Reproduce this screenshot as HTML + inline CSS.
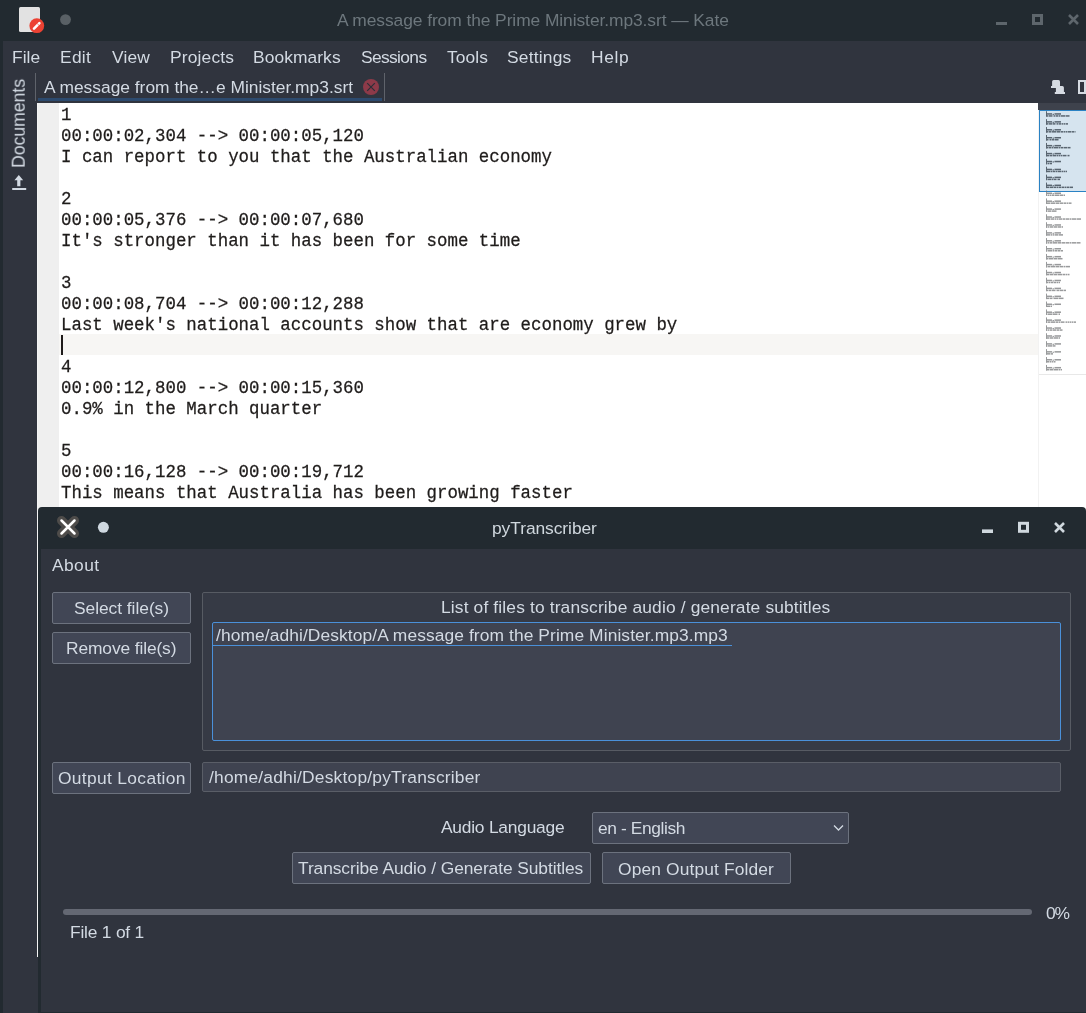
<!DOCTYPE html>
<html><head><meta charset="utf-8"><style>
*{margin:0;padding:0;box-sizing:border-box}
html,body{width:1086px;height:1013px;overflow:hidden;background:#30343e;position:relative}
.a{position:absolute}
.t{position:absolute;will-change:transform;white-space:pre;line-height:20px;font-family:"Liberation Sans", sans-serif}
.m{position:absolute;will-change:transform;transform-origin:0 15.14px;transform:scaleY(1.07);-webkit-text-stroke:0.25px #1f1c1b;left:61px;white-space:pre;line-height:21px;font-family:"Liberation Mono", monospace;font-size:17.42px;color:#1f1c1b}
</style></head><body>
<!-- Kate title bar -->
<div class="a" style="left:0;top:0;width:1086px;height:41px;background:#222a30"></div>
<div class="a" style="left:0;top:41px;width:3px;height:972px;background:#222a30"></div>
<div class="a" style="left:19px;top:7px;width:20.5px;height:25px;background:#e2e2e2;border-radius:1.5px"></div>
<svg class="a" style="left:0;top:0" width="120" height="41">
 <circle cx="36.8" cy="25.7" r="7.4" fill="#ec4233"/>
 <line x1="34" y1="28.6" x2="39.4" y2="23.2" stroke="#fff" stroke-width="2.6" stroke-linecap="round"/>
 <line x1="37.2" y1="23.6" x2="39" y2="25.4" stroke="#ec4233" stroke-width="0.7"/>
 <circle cx="65.5" cy="19.6" r="5.4" fill="#596065"/>
</svg>
<svg class="a" style="left:990px;top:10px" width="96" height="20">
 <rect x="6" y="12" width="11" height="3" fill="#5e666c"/>
 <rect x="43.5" y="5.5" width="8" height="8" fill="none" stroke="#5e666c" stroke-width="3"/>
 <path d="M79 5 L88 14 M88 5 L79 14" stroke="#5e666c" stroke-width="2.6"/>
</svg>
<!-- tab bar -->
<div class="a" style="left:35px;top:73px;width:1px;height:28px;background:#5f636b"></div>
<div class="a" style="left:384px;top:73px;width:1px;height:28px;background:#5f636b"></div>
<div class="a" style="left:38px;top:98px;width:344px;height:3px;background:#2c4a6e"></div>
<svg class="a" style="left:355px;top:72px" width="32" height="30">
 <circle cx="16" cy="15" r="8" fill="#8d3a49"/>
 <path d="M12.2 11.2 L19.8 18.8 M19.8 11.2 L12.2 18.8" stroke="#2b2f38" stroke-width="1.2"/>
</svg>
<svg class="a" style="left:1045px;top:75px" width="41" height="22">
 <path d="M7.1 13 V6.5 Q7.1 5 8.6 5 H13.5 Q15 5 15 6.5 V13 Z" fill="#d6dbe2"/>
 <rect x="6" y="11" width="9" height="2" fill="#d6dbe2"/>
 <path d="M10.9 19 V12.5 Q10.9 11 12.4 11 H17.4 Q18.9 11 18.9 12.5 V19 Z" fill="#d6dbe2"/>
 <rect x="9.8" y="17" width="10.2" height="2" fill="#d6dbe2"/>
 <rect x="34" y="6" width="6" height="12" fill="none" stroke="#d6dbe2" stroke-width="2"/>
</svg>
<!-- editor -->
<div class="a" style="left:37px;top:103px;width:1049px;height:854px;background:#ffffff"></div>
<div class="a" style="left:37px;top:103px;width:1px;height:854px;background:#f4f4f4"></div>
<div class="a" style="left:38px;top:103px;width:21px;height:854px;background:#efefef"></div>
<div class="a" style="left:59px;top:334px;width:979px;height:21px;background:#f7f6f4"></div>
<div class="a" style="left:61px;top:335px;width:2px;height:20px;background:#1f1c1b"></div>
<div class="m" style="top:105.16px">1</div>
<div class="m" style="top:126.16px">00:00:02,304 --&gt; 00:00:05,120</div>
<div class="m" style="top:147.16px">I can report to you that the Australian economy</div>
<div class="m" style="top:189.16px">2</div>
<div class="m" style="top:210.16px">00:00:05,376 --&gt; 00:00:07,680</div>
<div class="m" style="top:231.16px">It's stronger than it has been for some time</div>
<div class="m" style="top:273.16px">3</div>
<div class="m" style="top:294.16px">00:00:08,704 --&gt; 00:00:12,288</div>
<div class="m" style="top:315.16px">Last week's national accounts show that are economy grew by</div>
<div class="m" style="top:357.16px">4</div>
<div class="m" style="top:378.16px">00:00:12,800 --&gt; 00:00:15,360</div>
<div class="m" style="top:399.16px">0.9% in the March quarter</div>
<div class="m" style="top:441.16px">5</div>
<div class="m" style="top:462.16px">00:00:16,128 --&gt; 00:00:19,712</div>
<div class="m" style="top:483.16px">This means that Australia has been growing faster</div>
<div class="m" style="top:525.16px">6</div>
<div class="m" style="top:546.16px">00:00:20,000 --&gt; 00:00:22,000</div>
<div class="m" style="top:567.16px">than most other developed economies</div>
<!-- minimap -->
<div class="a" style="left:1038px;top:103px;width:48px;height:7px;background:#3e424c"></div>
<div class="a" style="left:1038px;top:110px;width:1px;height:847px;background:#f2f2f2"></div>
<div class="a" style="left:1039px;top:110px;width:47px;height:82px;background:#d6e4ef;border:1px solid #2a82c4;border-right:none"></div>
<div class="a" style="left:1039px;top:374px;width:47px;height:1px;background:#e8e8e8"></div>
<svg class="a" style="left:0;top:0" width="1086" height="400">
<g fill="#26313c" opacity="0.7"><rect x="1046" y="111.20" width="1" height="5.5"/><rect x="1046" y="113.20" width="6" height="1.5"/><rect x="1052.5" y="113.80" width="1.5" height="1.1"/><rect x="1054.5" y="113.20" width="6.5" height="1.5"/><rect x="1046.0" y="115.20" width="0.5" height="1.5"/><rect x="1047.0" y="115.20" width="1.5" height="1.5"/><rect x="1049.0" y="115.20" width="3.0" height="1.5"/><rect x="1052.5" y="115.20" width="1.0" height="1.5"/><rect x="1054.0" y="115.20" width="1.5" height="1.5"/><rect x="1056.0" y="115.20" width="2.0" height="1.5"/><rect x="1058.5" y="115.20" width="1.5" height="1.5"/><rect x="1060.5" y="115.20" width="5.0" height="1.5"/><rect x="1066.0" y="115.20" width="3.5" height="1.5"/></g>
<g fill="#26313c" opacity="0.7"><rect x="1046" y="119.13" width="1" height="5.5"/><rect x="1046" y="121.13" width="6" height="1.5"/><rect x="1052.5" y="121.73" width="1.5" height="1.1"/><rect x="1054.5" y="121.13" width="6.5" height="1.5"/><rect x="1046.0" y="123.13" width="2.0" height="1.5"/><rect x="1048.5" y="123.13" width="4.0" height="1.5"/><rect x="1053.0" y="123.13" width="2.0" height="1.5"/><rect x="1055.5" y="123.13" width="1.0" height="1.5"/><rect x="1057.0" y="123.13" width="1.5" height="1.5"/><rect x="1059.0" y="123.13" width="2.0" height="1.5"/><rect x="1061.5" y="123.13" width="1.5" height="1.5"/><rect x="1063.5" y="123.13" width="2.0" height="1.5"/><rect x="1066.0" y="123.13" width="2.0" height="1.5"/></g>
<g fill="#26313c" opacity="0.7"><rect x="1046" y="127.06" width="1" height="5.5"/><rect x="1046" y="129.06" width="6" height="1.5"/><rect x="1052.5" y="129.66" width="1.5" height="1.1"/><rect x="1054.5" y="129.06" width="6.5" height="1.5"/><rect x="1046.0" y="131.06" width="2.0" height="1.5"/><rect x="1048.5" y="131.06" width="3.0" height="1.5"/><rect x="1052.0" y="131.06" width="4.0" height="1.5"/><rect x="1056.5" y="131.06" width="4.0" height="1.5"/><rect x="1061.0" y="131.06" width="2.0" height="1.5"/><rect x="1063.5" y="131.06" width="2.0" height="1.5"/><rect x="1066.0" y="131.06" width="1.5" height="1.5"/><rect x="1068.0" y="131.06" width="3.5" height="1.5"/><rect x="1072.0" y="131.06" width="2.0" height="1.5"/><rect x="1074.5" y="131.06" width="1.0" height="1.5"/></g>
<g fill="#26313c" opacity="0.7"><rect x="1046" y="134.99" width="1" height="5.5"/><rect x="1046" y="136.99" width="6" height="1.5"/><rect x="1052.5" y="137.59" width="1.5" height="1.1"/><rect x="1054.5" y="136.99" width="6.5" height="1.5"/><rect x="1046.0" y="138.99" width="2.0" height="1.5"/><rect x="1048.5" y="138.99" width="1.0" height="1.5"/><rect x="1050.0" y="138.99" width="1.5" height="1.5"/><rect x="1052.0" y="138.99" width="2.5" height="1.5"/><rect x="1055.0" y="138.99" width="3.5" height="1.5"/></g>
<g fill="#26313c" opacity="0.7"><rect x="1046" y="142.92" width="1" height="5.5"/><rect x="1046" y="144.92" width="6" height="1.5"/><rect x="1052.5" y="145.52" width="1.5" height="1.1"/><rect x="1054.5" y="144.92" width="6.5" height="1.5"/><rect x="1046.0" y="146.92" width="2.0" height="1.5"/><rect x="1048.5" y="146.92" width="2.5" height="1.5"/><rect x="1051.5" y="146.92" width="2.0" height="1.5"/><rect x="1054.0" y="146.92" width="4.5" height="1.5"/><rect x="1059.0" y="146.92" width="1.5" height="1.5"/><rect x="1061.0" y="146.92" width="2.0" height="1.5"/><rect x="1063.5" y="146.92" width="3.5" height="1.5"/><rect x="1067.5" y="146.92" width="3.0" height="1.5"/></g>
<g fill="#26313c" opacity="0.7"><rect x="1046" y="150.85" width="1" height="5.5"/><rect x="1046" y="152.85" width="6" height="1.5"/><rect x="1052.5" y="153.45" width="1.5" height="1.1"/><rect x="1054.5" y="152.85" width="6.5" height="1.5"/><rect x="1046.0" y="154.85" width="3.5" height="1.5"/><rect x="1050.0" y="154.85" width="2.0" height="1.5"/><rect x="1052.5" y="154.85" width="4.0" height="1.5"/><rect x="1057.0" y="154.85" width="1.0" height="1.5"/><rect x="1058.5" y="154.85" width="1.5" height="1.5"/><rect x="1060.5" y="154.85" width="1.5" height="1.5"/><rect x="1062.5" y="154.85" width="3.5" height="1.5"/><rect x="1066.5" y="154.85" width="1.0" height="1.5"/><rect x="1068.0" y="154.85" width="1.5" height="1.5"/></g>
<g fill="#26313c" opacity="0.7"><rect x="1046" y="158.78" width="1" height="5.5"/><rect x="1046" y="160.78" width="6" height="1.5"/><rect x="1052.5" y="161.38" width="1.5" height="1.1"/><rect x="1054.5" y="160.78" width="6.5" height="1.5"/><rect x="1046.0" y="162.78" width="1.0" height="1.5"/><rect x="1047.5" y="162.78" width="1.5" height="1.5"/><rect x="1049.5" y="162.78" width="2.5" height="1.5"/></g>
<g fill="#26313c" opacity="0.7"><rect x="1046" y="166.71" width="1" height="5.5"/><rect x="1046" y="168.71" width="6" height="1.5"/><rect x="1052.5" y="169.31" width="1.5" height="1.1"/><rect x="1054.5" y="168.71" width="6.5" height="1.5"/><rect x="1046.0" y="170.71" width="4.0" height="1.5"/><rect x="1050.5" y="170.71" width="1.5" height="1.5"/><rect x="1052.5" y="170.71" width="2.5" height="1.5"/><rect x="1055.5" y="170.71" width="1.5" height="1.5"/><rect x="1057.5" y="170.71" width="4.0" height="1.5"/><rect x="1062.0" y="170.71" width="1.0" height="1.5"/><rect x="1063.5" y="170.71" width="1.5" height="1.5"/><rect x="1065.5" y="170.71" width="1.5" height="1.5"/></g>
<g fill="#26313c" opacity="0.7"><rect x="1046" y="174.64" width="1" height="5.5"/><rect x="1046" y="176.64" width="6" height="1.5"/><rect x="1052.5" y="177.24" width="1.5" height="1.1"/><rect x="1054.5" y="176.64" width="6.5" height="1.5"/><rect x="1046.0" y="178.64" width="1.0" height="1.5"/><rect x="1047.5" y="178.64" width="4.0" height="1.5"/><rect x="1052.0" y="178.64" width="1.0" height="1.5"/><rect x="1053.5" y="178.64" width="2.5" height="1.5"/><rect x="1056.5" y="178.64" width="1.0" height="1.5"/><rect x="1058.0" y="178.64" width="2.0" height="1.5"/></g>
<g fill="#26313c" opacity="0.7"><rect x="1046" y="182.57" width="1" height="5.5"/><rect x="1046" y="184.57" width="6" height="1.5"/><rect x="1052.5" y="185.17" width="1.5" height="1.1"/><rect x="1054.5" y="184.57" width="6.5" height="1.5"/><rect x="1046.0" y="186.57" width="3.0" height="1.5"/><rect x="1049.5" y="186.57" width="4.0" height="1.5"/><rect x="1054.0" y="186.57" width="2.0" height="1.5"/><rect x="1056.5" y="186.57" width="1.5" height="1.5"/><rect x="1058.5" y="186.57" width="3.0" height="1.5"/><rect x="1062.0" y="186.57" width="2.0" height="1.5"/><rect x="1064.5" y="186.57" width="1.5" height="1.5"/><rect x="1066.5" y="186.57" width="2.5" height="1.5"/><rect x="1069.5" y="186.57" width="3.5" height="1.5"/></g>
<g fill="#6e7072" opacity="0.7"><rect x="1046" y="190.50" width="1" height="5.5"/><rect x="1046" y="192.50" width="6" height="1.5"/><rect x="1052.5" y="193.10" width="1.5" height="1.1"/><rect x="1054.5" y="192.50" width="6.5" height="1.5"/><rect x="1046.0" y="194.50" width="1.5" height="1.5"/><rect x="1048.0" y="194.50" width="1.5" height="1.5"/><rect x="1050.0" y="194.50" width="1.0" height="1.5"/><rect x="1051.5" y="194.50" width="2.5" height="1.5"/><rect x="1054.5" y="194.50" width="4.5" height="1.5"/><rect x="1059.5" y="194.50" width="4.0" height="1.5"/><rect x="1064.0" y="194.50" width="1.0" height="1.5"/></g>
<g fill="#6e7072" opacity="0.7"><rect x="1046" y="198.43" width="1" height="5.5"/><rect x="1046" y="200.43" width="6" height="1.5"/><rect x="1052.5" y="201.03" width="1.5" height="1.1"/><rect x="1054.5" y="200.43" width="6.5" height="1.5"/><rect x="1046.0" y="202.43" width="4.5" height="1.5"/><rect x="1051.0" y="202.43" width="4.5" height="1.5"/><rect x="1056.0" y="202.43" width="3.5" height="1.5"/><rect x="1060.0" y="202.43" width="3.0" height="1.5"/><rect x="1063.5" y="202.43" width="2.5" height="1.5"/><rect x="1066.5" y="202.43" width="2.0" height="1.5"/><rect x="1069.0" y="202.43" width="2.5" height="1.5"/></g>
<g fill="#6e7072" opacity="0.7"><rect x="1046" y="206.36" width="1" height="5.5"/><rect x="1046" y="208.36" width="6" height="1.5"/><rect x="1052.5" y="208.96" width="1.5" height="1.1"/><rect x="1054.5" y="208.36" width="6.5" height="1.5"/><rect x="1046.0" y="210.36" width="1.5" height="1.5"/><rect x="1048.0" y="210.36" width="3.0" height="1.5"/><rect x="1051.5" y="210.36" width="4.5" height="1.5"/><rect x="1056.5" y="210.36" width="0.5" height="1.5"/></g>
<g fill="#6e7072" opacity="0.7"><rect x="1046" y="214.29" width="1" height="5.5"/><rect x="1046" y="216.29" width="6" height="1.5"/><rect x="1052.5" y="216.89" width="1.5" height="1.1"/><rect x="1054.5" y="216.29" width="6.5" height="1.5"/><rect x="1046.0" y="218.29" width="4.5" height="1.5"/><rect x="1051.0" y="218.29" width="3.0" height="1.5"/><rect x="1054.5" y="218.29" width="1.5" height="1.5"/><rect x="1056.5" y="218.29" width="1.5" height="1.5"/><rect x="1058.5" y="218.29" width="4.0" height="1.5"/><rect x="1063.0" y="218.29" width="2.0" height="1.5"/><rect x="1065.5" y="218.29" width="3.5" height="1.5"/><rect x="1069.5" y="218.29" width="2.0" height="1.5"/><rect x="1072.0" y="218.29" width="4.5" height="1.5"/><rect x="1077.0" y="218.29" width="4.0" height="1.5"/></g>
<g fill="#6e7072" opacity="0.7"><rect x="1046" y="222.22" width="1" height="5.5"/><rect x="1046" y="224.22" width="6" height="1.5"/><rect x="1052.5" y="224.82" width="1.5" height="1.1"/><rect x="1054.5" y="224.22" width="6.5" height="1.5"/><rect x="1046.0" y="226.22" width="1.0" height="1.5"/><rect x="1047.5" y="226.22" width="1.5" height="1.5"/><rect x="1049.5" y="226.22" width="3.5" height="1.5"/><rect x="1053.5" y="226.22" width="3.5" height="1.5"/><rect x="1057.5" y="226.22" width="3.5" height="1.5"/><rect x="1061.5" y="226.22" width="1.5" height="1.5"/></g>
<g fill="#6e7072" opacity="0.7"><rect x="1046" y="230.15" width="1" height="5.5"/><rect x="1046" y="232.15" width="6" height="1.5"/><rect x="1052.5" y="232.75" width="1.5" height="1.1"/><rect x="1054.5" y="232.15" width="6.5" height="1.5"/><rect x="1046.0" y="234.15" width="4.5" height="1.5"/><rect x="1051.0" y="234.15" width="1.5" height="1.5"/><rect x="1053.0" y="234.15" width="1.5" height="1.5"/><rect x="1055.0" y="234.15" width="3.0" height="1.5"/><rect x="1058.5" y="234.15" width="4.5" height="1.5"/></g>
<g fill="#6e7072" opacity="0.7"><rect x="1046" y="238.08" width="1" height="5.5"/><rect x="1046" y="240.08" width="6" height="1.5"/><rect x="1052.5" y="240.68" width="1.5" height="1.1"/><rect x="1054.5" y="240.08" width="6.5" height="1.5"/><rect x="1046.0" y="242.08" width="1.5" height="1.5"/><rect x="1048.0" y="242.08" width="1.0" height="1.5"/><rect x="1049.5" y="242.08" width="3.0" height="1.5"/><rect x="1053.0" y="242.08" width="4.5" height="1.5"/><rect x="1058.0" y="242.08" width="3.0" height="1.5"/><rect x="1061.5" y="242.08" width="4.0" height="1.5"/><rect x="1066.0" y="242.08" width="3.5" height="1.5"/><rect x="1070.0" y="242.08" width="1.0" height="1.5"/><rect x="1071.5" y="242.08" width="4.5" height="1.5"/><rect x="1076.5" y="242.08" width="3.5" height="1.5"/><rect x="1080.5" y="242.08" width="0.5" height="1.5"/></g>
<g fill="#6e7072" opacity="0.7"><rect x="1046" y="246.01" width="1" height="5.5"/><rect x="1046" y="248.01" width="6" height="1.5"/><rect x="1052.5" y="248.61" width="1.5" height="1.1"/><rect x="1054.5" y="248.01" width="6.5" height="1.5"/><rect x="1046.0" y="250.01" width="1.5" height="1.5"/><rect x="1048.0" y="250.01" width="4.5" height="1.5"/><rect x="1053.0" y="250.01" width="1.0" height="1.5"/><rect x="1054.5" y="250.01" width="2.5" height="1.5"/><rect x="1057.5" y="250.01" width="3.0" height="1.5"/><rect x="1061.0" y="250.01" width="2.0" height="1.5"/></g>
<g fill="#6e7072" opacity="0.7"><rect x="1046" y="253.94" width="1" height="5.5"/><rect x="1046" y="255.94" width="6" height="1.5"/><rect x="1052.5" y="256.54" width="1.5" height="1.1"/><rect x="1054.5" y="255.94" width="6.5" height="1.5"/><rect x="1046.0" y="257.94" width="2.5" height="1.5"/><rect x="1049.0" y="257.94" width="4.0" height="1.5"/><rect x="1053.5" y="257.94" width="4.0" height="1.5"/><rect x="1058.0" y="257.94" width="4.5" height="1.5"/></g>
<g fill="#6e7072" opacity="0.7"><rect x="1046" y="261.87" width="1" height="5.5"/><rect x="1046" y="263.87" width="6" height="1.5"/><rect x="1052.5" y="264.47" width="1.5" height="1.1"/><rect x="1054.5" y="263.87" width="6.5" height="1.5"/><rect x="1046.0" y="265.87" width="1.5" height="1.5"/><rect x="1048.0" y="265.87" width="2.0" height="1.5"/><rect x="1050.5" y="265.87" width="4.5" height="1.5"/><rect x="1055.5" y="265.87" width="4.0" height="1.5"/><rect x="1060.0" y="265.87" width="3.0" height="1.5"/><rect x="1063.5" y="265.87" width="2.0" height="1.5"/><rect x="1066.0" y="265.87" width="4.0" height="1.5"/></g>
<g fill="#6e7072" opacity="0.7"><rect x="1046" y="269.80" width="1" height="5.5"/><rect x="1046" y="271.80" width="6" height="1.5"/><rect x="1052.5" y="272.40" width="1.5" height="1.1"/><rect x="1054.5" y="271.80" width="6.5" height="1.5"/><rect x="1046.0" y="273.80" width="3.0" height="1.5"/><rect x="1049.5" y="273.80" width="4.0" height="1.5"/><rect x="1054.0" y="273.80" width="3.5" height="1.5"/><rect x="1058.0" y="273.80" width="4.0" height="1.5"/><rect x="1062.5" y="273.80" width="2.5" height="1.5"/><rect x="1065.5" y="273.80" width="2.0" height="1.5"/><rect x="1068.0" y="273.80" width="1.5" height="1.5"/></g>
<g fill="#6e7072" opacity="0.7"><rect x="1046" y="277.73" width="1" height="5.5"/><rect x="1046" y="279.73" width="6" height="1.5"/><rect x="1052.5" y="280.33" width="1.5" height="1.1"/><rect x="1054.5" y="279.73" width="6.5" height="1.5"/><rect x="1046.0" y="281.73" width="2.0" height="1.5"/><rect x="1048.5" y="281.73" width="2.0" height="1.5"/><rect x="1051.0" y="281.73" width="2.5" height="1.5"/><rect x="1054.0" y="281.73" width="2.5" height="1.5"/><rect x="1057.0" y="281.73" width="1.0" height="1.5"/><rect x="1058.5" y="281.73" width="1.5" height="1.5"/></g>
<g fill="#6e7072" opacity="0.7"><rect x="1046" y="285.66" width="1" height="5.5"/><rect x="1046" y="287.66" width="6" height="1.5"/><rect x="1052.5" y="288.26" width="1.5" height="1.1"/><rect x="1054.5" y="287.66" width="6.5" height="1.5"/><rect x="1046.0" y="289.66" width="2.0" height="1.5"/><rect x="1048.5" y="289.66" width="3.0" height="1.5"/><rect x="1052.0" y="289.66" width="3.0" height="1.5"/><rect x="1055.5" y="289.66" width="1.0" height="1.5"/><rect x="1057.0" y="289.66" width="2.0" height="1.5"/><rect x="1059.5" y="289.66" width="4.0" height="1.5"/><rect x="1064.0" y="289.66" width="2.0" height="1.5"/></g>
<g fill="#6e7072" opacity="0.7"><rect x="1046" y="293.59" width="1" height="5.5"/><rect x="1046" y="295.59" width="6" height="1.5"/><rect x="1052.5" y="296.19" width="1.5" height="1.1"/><rect x="1054.5" y="295.59" width="6.5" height="1.5"/><rect x="1046.0" y="297.59" width="3.5" height="1.5"/><rect x="1050.0" y="297.59" width="2.0" height="1.5"/><rect x="1052.5" y="297.59" width="1.0" height="1.5"/><rect x="1054.0" y="297.59" width="4.5" height="1.5"/><rect x="1059.0" y="297.59" width="4.0" height="1.5"/><rect x="1063.5" y="297.59" width="0.5" height="1.5"/></g>
<g fill="#6e7072" opacity="0.7"><rect x="1046" y="301.52" width="1" height="5.5"/><rect x="1046" y="303.52" width="6" height="1.5"/><rect x="1052.5" y="304.12" width="1.5" height="1.1"/><rect x="1054.5" y="303.52" width="6.5" height="1.5"/><rect x="1046.0" y="305.52" width="4.0" height="1.5"/><rect x="1050.5" y="305.52" width="1.5" height="1.5"/></g>
<g fill="#6e7072" opacity="0.7"><rect x="1046" y="309.45" width="1" height="5.5"/><rect x="1046" y="311.45" width="6" height="1.5"/><rect x="1052.5" y="312.05" width="1.5" height="1.1"/><rect x="1054.5" y="311.45" width="6.5" height="1.5"/><rect x="1046.0" y="313.45" width="1.5" height="1.5"/><rect x="1048.0" y="313.45" width="4.5" height="1.5"/><rect x="1053.0" y="313.45" width="4.0" height="1.5"/><rect x="1057.5" y="313.45" width="1.0" height="1.5"/><rect x="1059.0" y="313.45" width="1.0" height="1.5"/></g>
<g fill="#6e7072" opacity="0.7"><rect x="1046" y="317.38" width="1" height="5.5"/><rect x="1046" y="319.38" width="6" height="1.5"/><rect x="1052.5" y="319.98" width="1.5" height="1.1"/><rect x="1054.5" y="319.38" width="6.5" height="1.5"/><rect x="1046.0" y="321.38" width="1.5" height="1.5"/><rect x="1048.0" y="321.38" width="2.5" height="1.5"/><rect x="1051.0" y="321.38" width="4.5" height="1.5"/><rect x="1056.0" y="321.38" width="2.0" height="1.5"/><rect x="1058.5" y="321.38" width="1.5" height="1.5"/><rect x="1060.5" y="321.38" width="3.5" height="1.5"/><rect x="1064.5" y="321.38" width="1.0" height="1.5"/><rect x="1066.0" y="321.38" width="1.5" height="1.5"/><rect x="1068.0" y="321.38" width="1.0" height="1.5"/><rect x="1069.5" y="321.38" width="2.0" height="1.5"/><rect x="1072.0" y="321.38" width="1.5" height="1.5"/><rect x="1074.0" y="321.38" width="2.0" height="1.5"/></g>
<g fill="#6e7072" opacity="0.7"><rect x="1046" y="325.31" width="1" height="5.5"/><rect x="1046" y="327.31" width="6" height="1.5"/><rect x="1052.5" y="327.91" width="1.5" height="1.1"/><rect x="1054.5" y="327.31" width="6.5" height="1.5"/><rect x="1046.0" y="329.31" width="1.0" height="1.5"/><rect x="1047.5" y="329.31" width="1.5" height="1.5"/><rect x="1049.5" y="329.31" width="2.5" height="1.5"/><rect x="1052.5" y="329.31" width="4.0" height="1.5"/><rect x="1057.0" y="329.31" width="2.0" height="1.5"/><rect x="1059.5" y="329.31" width="3.0" height="1.5"/></g>
<g fill="#6e7072" opacity="0.7"><rect x="1046" y="333.24" width="1" height="5.5"/><rect x="1046" y="335.24" width="6" height="1.5"/><rect x="1052.5" y="335.84" width="1.5" height="1.1"/><rect x="1054.5" y="335.24" width="6.5" height="1.5"/><rect x="1046.0" y="337.24" width="3.5" height="1.5"/><rect x="1050.0" y="337.24" width="3.5" height="1.5"/><rect x="1054.0" y="337.24" width="4.5" height="1.5"/><rect x="1059.0" y="337.24" width="1.0" height="1.5"/></g>
<g fill="#6e7072" opacity="0.7"><rect x="1046" y="341.17" width="1" height="5.5"/><rect x="1046" y="343.17" width="6" height="1.5"/><rect x="1052.5" y="343.77" width="1.5" height="1.1"/><rect x="1054.5" y="343.17" width="6.5" height="1.5"/><rect x="1046.0" y="345.17" width="1.5" height="1.5"/><rect x="1048.0" y="345.17" width="4.5" height="1.5"/><rect x="1053.0" y="345.17" width="2.5" height="1.5"/></g>
<g fill="#6e7072" opacity="0.7"><rect x="1046" y="349.10" width="1" height="5.5"/><rect x="1046" y="351.10" width="6" height="1.5"/><rect x="1052.5" y="351.70" width="1.5" height="1.1"/><rect x="1054.5" y="351.10" width="6.5" height="1.5"/><rect x="1046.0" y="353.10" width="4.5" height="1.5"/><rect x="1051.0" y="353.10" width="2.0" height="1.5"/></g>
<g fill="#6e7072" opacity="0.7"><rect x="1046" y="357.03" width="1" height="5.5"/><rect x="1046" y="359.03" width="6" height="1.5"/><rect x="1052.5" y="359.63" width="1.5" height="1.1"/><rect x="1054.5" y="359.03" width="6.5" height="1.5"/><rect x="1046.0" y="361.03" width="3.0" height="1.5"/><rect x="1049.5" y="361.03" width="1.5" height="1.5"/><rect x="1051.5" y="361.03" width="2.0" height="1.5"/><rect x="1054.0" y="361.03" width="1.5" height="1.5"/></g>
<g fill="#6e7072" opacity="0.7"><rect x="1046" y="364.96" width="1" height="5.5"/><rect x="1046" y="366.96" width="6" height="1.5"/><rect x="1052.5" y="367.56" width="1.5" height="1.1"/><rect x="1054.5" y="366.96" width="6.5" height="1.5"/><rect x="1046.0" y="368.96" width="3.5" height="1.5"/><rect x="1050.0" y="368.96" width="3.0" height="1.5"/><rect x="1053.5" y="368.96" width="4.5" height="1.5"/><rect x="1058.5" y="368.96" width="2.0" height="1.5"/><rect x="1061.0" y="368.96" width="1.0" height="1.5"/></g>
</svg>
<!-- pyTranscriber window -->
<div class="a" style="left:38px;top:507px;width:1048px;height:506px;background:#222a30;border-radius:4px 4px 0 0"></div>
<div class="a" style="left:41px;top:549px;width:1045px;height:463px;background:#30343e"></div>
<svg class="a" style="left:50px;top:510px" width="70" height="34">
 <path d="M11.5 10.5 L24.5 23.5 M24.5 10.5 L11.5 23.5" stroke="#4e4c4a" stroke-width="9" stroke-linecap="round"/>
 <path d="M11.5 10.5 L24.5 23.5 M24.5 10.5 L11.5 23.5" stroke="#ffffff" stroke-width="2.5" stroke-linecap="round"/>
 <circle cx="53.4" cy="17.3" r="5.5" fill="#cfd8e0"/>
</svg>
<svg class="a" style="left:976px;top:515px" width="110" height="24">
 <rect x="6" y="14.4" width="11" height="3.6" fill="#d0d8de"/>
 <rect x="43.5" y="8.3" width="8" height="8" fill="none" stroke="#d0d8de" stroke-width="3"/>
 <path d="M79 8 L88 17 M88 8 L79 17" stroke="#d0d8de" stroke-width="2.6"/>
</svg>
<div class="a" style="left:52px;top:592px;width:139px;height:32px;background:#414655;border:1px solid #6c727e;border-radius:2px"></div>
<div class="a" style="left:52px;top:632px;width:139px;height:32px;background:#414655;border:1px solid #6c727e;border-radius:2px"></div>
<div class="a" style="left:202px;top:592px;width:869px;height:159px;background:#363a45;border:1px solid #575b63;border-radius:2px"></div>
<div class="a" style="left:212px;top:622px;width:849px;height:119px;background:#3f4350;border:1px solid #4a90d9;border-radius:2px"></div>
<div class="a" style="left:213px;top:645px;width:519px;height:1px;background:#4a90d9"></div>
<div class="a" style="left:52px;top:762px;width:139px;height:32px;background:#414655;border:1px solid #6c727e;border-radius:2px"></div>
<div class="a" style="left:202px;top:762px;width:859px;height:30px;background:#3f4350;border:1px solid #5a5e67;border-radius:2px"></div>
<div class="a" style="left:592px;top:812px;width:257px;height:32px;background:#414655;border:1px solid #6c727e;border-radius:2px"></div>
<svg class="a" style="left:830px;top:821px" width="16" height="14">
 <path d="M4 4.5 L8.5 9 L13 4.5" fill="none" stroke="#d3dae3" stroke-width="1.3"/>
</svg>
<div class="a" style="left:292px;top:852px;width:299px;height:32px;background:#414655;border:1px solid #6c727e;border-radius:2px"></div>
<div class="a" style="left:602px;top:852px;width:189px;height:32px;background:#414655;border:1px solid #6c727e;border-radius:2px"></div>
<div class="a" style="left:62.5px;top:909px;width:969.5px;height:6px;background:#646873;border-radius:3px"></div>
<div class="t" style="left:0;top:0;font-size:17.625px;color:#d3dae3;transform-origin:0 0;transform:translate(24.8px,167.89px) rotate(-90deg) translate(0,-16.11px)">Documents</div>
<svg class="a" style="left:8px;top:172px" width="24" height="22">
 <path d="M10.8 3 L6.4 8.3 H9.2 V14.2 H12.4 V8.3 H15.2 Z" fill="#d3dae3"/>
 <rect x="4.2" y="16" width="14" height="2" fill="#d3dae3"/>
</svg>
<div class="t" style="left:336.90px;top:9.97px;font-size:17.400px;letter-spacing:-0.073px;color:#6d777d">A message from the Prime Minister.mp3.srt — Kate</div>
<div class="t" style="left:12.41px;top:46.97px;font-size:17.400px;letter-spacing:0.061px;color:#d3dae3">File</div>
<div class="t" style="left:60.31px;top:46.97px;font-size:17.400px;letter-spacing:0.291px;color:#d3dae3">Edit</div>
<div class="t" style="left:112.40px;top:46.97px;font-size:17.400px;letter-spacing:0.121px;color:#d3dae3">View</div>
<div class="t" style="left:169.91px;top:46.97px;font-size:17.400px;letter-spacing:0.166px;color:#d3dae3">Projects</div>
<div class="t" style="left:253.01px;top:46.97px;font-size:17.400px;letter-spacing:0.074px;color:#d3dae3">Bookmarks</div>
<div class="t" style="left:360.50px;top:46.97px;font-size:17.400px;letter-spacing:-0.641px;color:#d3dae3">Sessions</div>
<div class="t" style="left:447.15px;top:46.97px;font-size:17.400px;letter-spacing:0.063px;color:#d3dae3">Tools</div>
<div class="t" style="left:507.30px;top:46.97px;font-size:17.400px;letter-spacing:0.207px;color:#d3dae3">Settings</div>
<div class="t" style="left:591.11px;top:46.97px;font-size:17.400px;letter-spacing:0.645px;color:#d3dae3">Help</div>
<div class="t" style="left:43.70px;top:76.97px;font-size:17.400px;letter-spacing:-0.007px;color:#d3dae3">A message from the…e Minister.mp3.srt</div>
<div class="t" style="left:492.36px;top:517.97px;font-size:17.400px;letter-spacing:-0.062px;color:#d0d8de">pyTranscriber</div>
<div class="t" style="left:51.50px;top:554.97px;font-size:17.400px;letter-spacing:0.423px;color:#d3dae3">About</div>
<div class="t" style="left:73.80px;top:597.97px;font-size:17.400px;letter-spacing:-0.047px;color:#d3dae3">Select file(s)</div>
<div class="t" style="left:66.01px;top:637.97px;font-size:17.400px;letter-spacing:-0.126px;color:#d3dae3">Remove file(s)</div>
<div class="t" style="left:440.81px;top:596.97px;font-size:17.400px;letter-spacing:0.141px;color:#d3dae3">List of files to transcribe audio / generate subtitles</div>
<div class="t" style="left:215.50px;top:625.47px;font-size:17.400px;letter-spacing:0.088px;color:#d3dae3">/home/adhi/Desktop/A message from the Prime Minister.mp3.mp3</div>
<div class="t" style="left:57.70px;top:768.37px;font-size:17.400px;letter-spacing:0.330px;color:#d3dae3">Output Location</div>
<div class="t" style="left:208.70px;top:766.97px;font-size:17.400px;letter-spacing:0.201px;color:#d3dae3">/home/adhi/Desktop/pyTranscriber</div>
<div class="t" style="left:441.20px;top:817.47px;font-size:17.400px;letter-spacing:-0.233px;color:#d3dae3">Audio Language</div>
<div class="t" style="left:598.00px;top:817.97px;font-size:17.400px;letter-spacing:-0.401px;color:#d3dae3">en - English</div>
<div class="t" style="left:298.45px;top:858.17px;font-size:17.400px;letter-spacing:-0.087px;color:#d3dae3">Transcribe Audio / Generate Subtitles</div>
<div class="t" style="left:618.30px;top:858.57px;font-size:17.400px;letter-spacing:0.126px;color:#d3dae3">Open Output Folder</div>
<div class="t" style="left:1045.78px;top:902.97px;font-size:17.400px;letter-spacing:-1.119px;color:#d3dae3">0%</div>
<div class="t" style="left:70.31px;top:921.97px;font-size:17.400px;letter-spacing:-0.211px;color:#d3dae3">File 1 of 1</div>
</body></html>
